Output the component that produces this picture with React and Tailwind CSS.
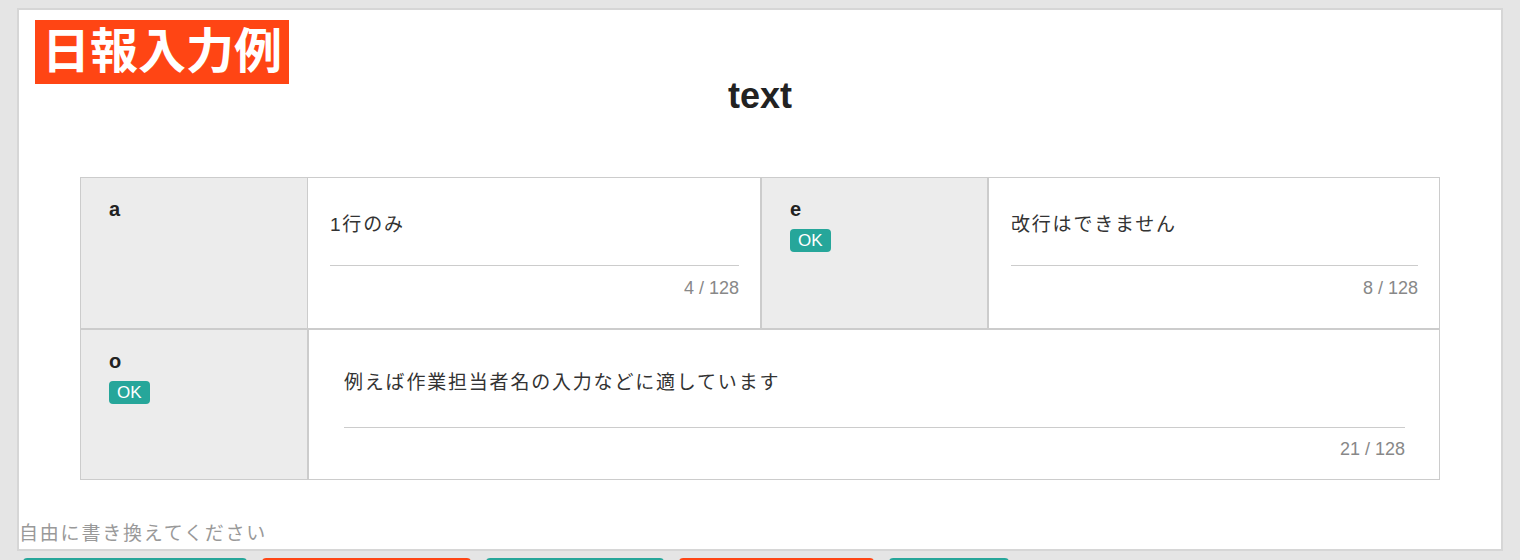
import React from 'react'

const FONT = { fontFamily: '"Liberation Sans", "Noto Sans CJK JP", sans-serif' }

function Badge() {
  return (
    <span className="inline-block bg-[#26a69a] text-white text-[17px] leading-[23px] px-[8px] rounded-[4px]">OK</span>
  )
}

function Label({ name, ok, className = '' }) {
  return (
    <div className={`bg-[#ececec] pl-[28px] pt-[17px] border-[#ccc] ${className}`}>
      <div className="text-[20px] leading-[28px] font-bold text-[#222]">{name}</div>
      {ok && <div className="mt-[6px]"><Badge /></div>}
    </div>
  )
}

function Field({ value, count, wide }) {
  return (
    <div className={wide ? 'pl-[35px] pr-[34px] pt-[39px]' : 'pl-[22px] pr-[21px] pt-[33px]'}>
      <div className={`text-[19px] leading-[27px] tracking-[1.8px] text-[#333] border-b border-[#ccc] ${wide ? 'pb-[31px]' : 'pb-[27px]'}`}>
        {value}
      </div>
      <div className={`text-right text-[18px] leading-[24px] text-[#888] ${wide ? 'mt-[9px]' : 'mt-[10px]'}`}>
        {count} / 128
      </div>
    </div>
  )
}

export default function App() {
  return (
    <div className="h-[560px] bg-[#e5e5e5] pt-[8px] overflow-hidden" style={FONT}>
      <div className="ml-[17px] w-[1486px] bg-white border-2 border-[#d6d6d6]">
        <div className="ml-[16px] mt-[10px]">
          <span className="inline-block bg-[#ff4514] text-white text-[48px] leading-[64px] px-[7px] font-bold">日報入力例</span>
        </div>
        <h1 className="-mt-[10px] text-center text-[36px] leading-[43px] font-bold text-[#222]">text</h1>

        <div className="ml-[61px] mt-[60px] w-[1360px] border border-[#ccc] grid grid-cols-[226px_453px_227px_1fr] grid-rows-[150px_151px]">
          <Label name="a" />
          <div className="border-l border-[#ccc]">
            <Field value="1行のみ" count={4} />
          </div>
          <Label name="e" ok className="border-l-2" />
          <div className="border-l-2 border-[#ccc]">
            <Field value="改行はできません" count={8} />
          </div>

          <Label name="o" ok className="border-t-2" />
          <div className="col-span-3 border-t-2 border-l-2 border-[#ccc]">
            <Field value="例えば作業担当者名の入力などに適しています" count={21} wide />
          </div>
        </div>

        <p className="mt-[40px] pb-[2px] text-[19px] leading-[27px] tracking-[1.8px] text-[#999]">自由に書き換えてください</p>
      </div>

      <div className="flex mt-[7px] ml-[23px] gap-[15px]">
        <div className="w-[224px] h-[40px] bg-[#26a69a] rounded-[4px]" />
        <div className="w-[209px] h-[40px] bg-[#ff4514] rounded-[4px]" />
        <div className="w-[178px] h-[40px] bg-[#26a69a] rounded-[4px]" />
        <div className="w-[195px] h-[40px] bg-[#ff4514] rounded-[4px]" />
        <div className="w-[120px] h-[40px] bg-[#26a69a] rounded-[4px]" />
      </div>
    </div>
  )
}
